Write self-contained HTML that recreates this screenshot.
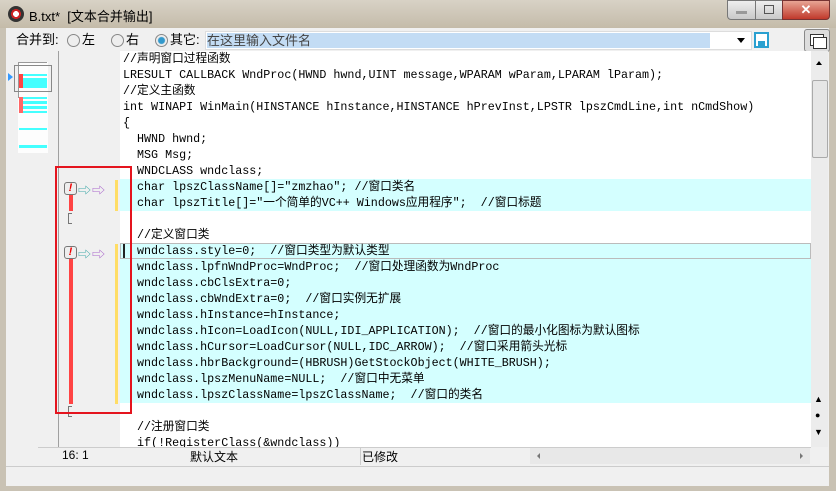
<!DOCTYPE html><html><head><meta charset="utf-8"><style>
body{margin:0;width:836px;height:491px;overflow:hidden;background:#c9c2b4;font-family:"Liberation Sans","Noto Sans CJK SC",sans-serif;position:relative}
.a{position:absolute}
.code{font-family:"Liberation Mono","Noto Sans CJK SC",monospace;font-size:11.7px;line-height:16px;white-space:pre;color:#000}
.ln{position:absolute;left:0;height:16px;width:691px;padding-left:3px;box-sizing:border-box}
.hl{background:#d4ffff}
.t{font-size:13px;line-height:16px}
</style></head><body>
<div class="a" style="left:0;top:0;width:836px;height:28px;background:linear-gradient(#d8d2c6,#c4bba9)"></div>
<div class="a" style="left:8px;top:6px;width:16px;height:16px;border-radius:50%;background:radial-gradient(circle at 50% 50%,#fff 0 3px,#c22 3px 5px,#333 5px)"></div>
<div class="a" style="left:29px;top:6px;font-size:13px;color:#000">B.txt*&nbsp; [文本合并输出]</div>
<div class="a" style="left:727px;top:0;width:27px;height:18px;border:1px solid #777;border-radius:0 0 0 4px;background:linear-gradient(#eee,#c9c9c9)"><div class="a" style="left:8px;top:10px;width:11px;height:3px;background:#999"></div></div>
<div class="a" style="left:755px;top:0;width:26px;height:18px;border:1px solid #777;background:linear-gradient(#eee,#c9c9c9)"><div class="a" style="left:8px;top:4px;width:8px;height:7px;border:1px solid #555"></div></div>
<div class="a" style="left:782px;top:0;width:46px;height:18px;border:1px solid #733;border-radius:0 0 4px 0;background:linear-gradient(#e8a595,#c0392b);color:#fff;font-weight:bold;text-align:center;font-size:13px;line-height:18px">✕</div>
<div class="a" style="left:6px;top:28px;width:823px;height:458px;background:#f0f0f0"></div>
<div class="a t" style="left:16px;top:32px">合并到:</div>
<div class="a" style="left:67px;top:34px;width:11px;height:11px;border:1px solid #888;border-radius:50%;background:#eee"></div>
<div class="a t" style="left:82px;top:32px">左</div>
<div class="a" style="left:111px;top:34px;width:11px;height:11px;border:1px solid #888;border-radius:50%;background:#eee"></div>
<div class="a t" style="left:126px;top:32px">右</div>
<div class="a" style="left:155px;top:34px;width:11px;height:11px;border:1px solid #888;border-radius:50%;background:radial-gradient(#39c 0 3px,#eee 4px)"></div>
<div class="a t" style="left:170px;top:32px">其它:</div>
<div class="a" style="left:205px;top:31px;width:545px;height:17px;background:#fff;border:1px solid #ddd"></div>
<div class="a" style="left:207px;top:33px;width:503px;height:15px;background:#c3dcf4;font-size:13px;line-height:15px;color:#444">在这里输入文件名</div>
<div class="a" style="left:737px;top:38px;border:4px solid transparent;border-top:5px solid #000;border-bottom:0"></div>
<div class="a" style="left:754px;top:32px;width:11px;height:12px;border:2px solid #2aa0d0;background:#fff"><div class="a" style="left:2px;top:7px;width:7px;height:5px;background:#2aa0d0"></div></div>
<div class="a" style="left:804px;top:29px;width:24px;height:21px;border:1px solid #888;border-radius:3px;background:#ddd"><div class="a" style="left:5px;top:4px;width:12px;height:10px;border:1px solid #333;background:#fff"></div><div class="a" style="left:8px;top:7px;width:12px;height:10px;border:1px solid #333;background:#fff"></div></div>
<!-- overview -->
<div class="a" style="left:58px;top:51px;width:1px;height:397px;background:#a0a0a0"></div>
<div class="a" style="left:18px;top:62px;width:30px;height:91px;background:#fdfdfd"></div>
<div class="a" style="left:18px;top:62px;width:1px;height:36px;background:#999"></div>
<div class="a" style="left:18px;top:62px;width:29px;height:1px;background:#999"></div>
<div class="a" style="left:14px;top:65px;width:36px;height:25px;border:1px solid #888"></div>
<div class="a" style="left:8px;top:73px;border:4px solid transparent;border-left:5px solid #39f"></div>
<div class="a" style="left:19px;top:74px;width:28px;height:2px;background:#4ff"></div>
<div class="a" style="left:19px;top:78px;width:28px;height:10px;background:#4ff"></div>
<div class="a" style="left:19px;top:74px;width:4px;height:14px;background:#f44"></div>
<div class="a" style="left:19px;top:97px;width:28px;height:2px;background:#4ff"></div>
<div class="a" style="left:19px;top:101px;width:28px;height:3px;background:#4ff"></div>
<div class="a" style="left:19px;top:106px;width:28px;height:3px;background:#4ff"></div>
<div class="a" style="left:19px;top:111px;width:28px;height:2px;background:#4ff"></div>
<div class="a" style="left:19px;top:128px;width:28px;height:2px;background:#4ff"></div>
<div class="a" style="left:19px;top:145px;width:28px;height:3px;background:#4ff"></div>
<div class="a" style="left:19px;top:97px;width:4px;height:16px;background:#f66"></div>
<!-- code area -->
<div class="a" style="left:120px;top:51px;width:691px;height:396px;background:#fff;overflow:hidden">
<div class="code a" style="left:0;top:0">
<div class="ln" style="top:0">//声明窗口过程函数</div>
<div class="ln" style="top:16px">LRESULT CALLBACK WndProc(HWND hwnd,UINT message,WPARAM wParam,LPARAM lParam);</div>
<div class="ln" style="top:32px">//定义主函数</div>
<div class="ln" style="top:48px">int WINAPI WinMain(HINSTANCE hInstance,HINSTANCE hPrevInst,LPSTR lpszCmdLine,int nCmdShow)</div>
<div class="ln" style="top:64px">{</div>
<div class="ln" style="top:80px">  HWND hwnd;</div>
<div class="ln" style="top:96px">  MSG Msg;</div>
<div class="ln" style="top:112px">  WNDCLASS wndclass;</div>
<div class="ln hl" style="top:128px">  char lpszClassName[]="zmzhao"; //窗口类名</div>
<div class="ln hl" style="top:144px">  char lpszTitle[]="一个简单的VC++ Windows应用程序";  //窗口标题</div>
<div class="ln" style="top:176px">  //定义窗口类</div>
<div class="ln hl" style="top:192px;border:1px solid #bbb;line-height:14px;padding-left:2px">  wndclass.style=0;  //窗口类型为默认类型</div>
<div class="ln hl" style="top:208px">  wndclass.lpfnWndProc=WndProc;  //窗口处理函数为WndProc</div>
<div class="ln hl" style="top:224px">  wndclass.cbClsExtra=0;</div>
<div class="ln hl" style="top:240px">  wndclass.cbWndExtra=0;  //窗口实例无扩展</div>
<div class="ln hl" style="top:256px">  wndclass.hInstance=hInstance;</div>
<div class="ln hl" style="top:272px">  wndclass.hIcon=LoadIcon(NULL,IDI_APPLICATION);  //窗口的最小化图标为默认图标</div>
<div class="ln hl" style="top:288px">  wndclass.hCursor=LoadCursor(NULL,IDC_ARROW);  //窗口采用箭头光标</div>
<div class="ln hl" style="top:304px">  wndclass.hbrBackground=(HBRUSH)GetStockObject(WHITE_BRUSH);</div>
<div class="ln hl" style="top:320px">  wndclass.lpszMenuName=NULL;  //窗口中无菜单</div>
<div class="ln hl" style="top:336px">  wndclass.lpszClassName=lpszClassName;  //窗口的类名</div>
<div class="ln" style="top:368px">  //注册窗口类</div>
<div class="ln" style="top:384px">  if(!RegisterClass(&amp;wndclass))</div>
</div>
<div class="a" style="left:3px;top:193px;width:2px;height:14px;background:#222"></div>
</div>
<!-- gutter marks -->
<div class="a" style="left:115px;top:180px;width:3px;height:31px;background:#fd6"></div>
<div class="a" style="left:115px;top:244px;width:3px;height:160px;background:#fd6"></div>
<div class="a" style="left:64px;top:182px;width:11px;height:11px;border:1px solid #777;border-radius:3px;background:#eee;color:#e00;font-weight:bold;font-size:11px;line-height:11px;text-align:center;font-style:italic">!</div>
<div class="a" style="left:64px;top:246px;width:11px;height:11px;border:1px solid #777;border-radius:3px;background:#eee;color:#e00;font-weight:bold;font-size:11px;line-height:11px;text-align:center;font-style:italic">!</div>
<div class="a" style="left:78px;top:180px;font-size:13px;color:#4aa">⇨</div>
<div class="a" style="left:92px;top:180px;font-size:13px;color:#a6c">⇨</div>
<div class="a" style="left:78px;top:244px;font-size:13px;color:#4aa">⇨</div>
<div class="a" style="left:92px;top:244px;font-size:13px;color:#a6c">⇨</div>
<div class="a" style="left:69px;top:195px;width:4px;height:16px;background:#f44"></div>
<div class="a" style="left:69px;top:259px;width:4px;height:145px;background:#f44"></div>
<div class="a" style="left:68px;top:213px;width:3px;height:9px;border:1px solid #777;border-right:0"></div>
<div class="a" style="left:68px;top:406px;width:3px;height:9px;border:1px solid #777;border-right:0"></div>
<div class="a" style="left:55px;top:166px;width:73px;height:244px;border:2px solid #e4141e"></div>
<!-- scrollbar -->
<div class="a" style="left:811px;top:51px;width:17px;height:396px;background:#ececec"></div>
<div class="a" style="left:816px;top:61px;border:3px solid transparent;border-bottom:4px solid #000;border-top:0"></div>
<div class="a" style="left:812px;top:80px;width:14px;height:76px;border:1px solid #aaa;border-radius:2px;background:#e6e6e6"></div>
<div class="a" style="left:814px;top:394px;font-size:9px">▲</div>
<div class="a" style="left:815px;top:410px;font-size:9px">●</div>
<div class="a" style="left:814px;top:427px;font-size:9px">▼</div>
<!-- status -->
<div class="a" style="left:38px;top:447px;width:773px;height:18px;background:#f0f0f0;border-top:1px solid #ccc"></div>
<div class="a" style="left:62px;top:448px;font-size:12px">16: 1</div>
<div class="a" style="left:190px;top:448px;font-size:12px">默认文本</div>
<div class="a" style="left:360px;top:448px;width:1px;height:17px;background:#ccc"></div>
<div class="a" style="left:362px;top:448px;font-size:12px">已修改</div>
<div class="a" style="left:530px;top:448px;width:280px;height:16px;background:#e8e8e8"></div>
<div class="a" style="left:534px;top:453px;border:3px solid transparent;border-right:3px solid #777"></div>
<div class="a" style="left:800px;top:453px;border:3px solid transparent;border-left:3px solid #777"></div>
<div class="a" style="left:6px;top:466px;width:823px;height:1px;background:#ccc"></div>
</body></html>
